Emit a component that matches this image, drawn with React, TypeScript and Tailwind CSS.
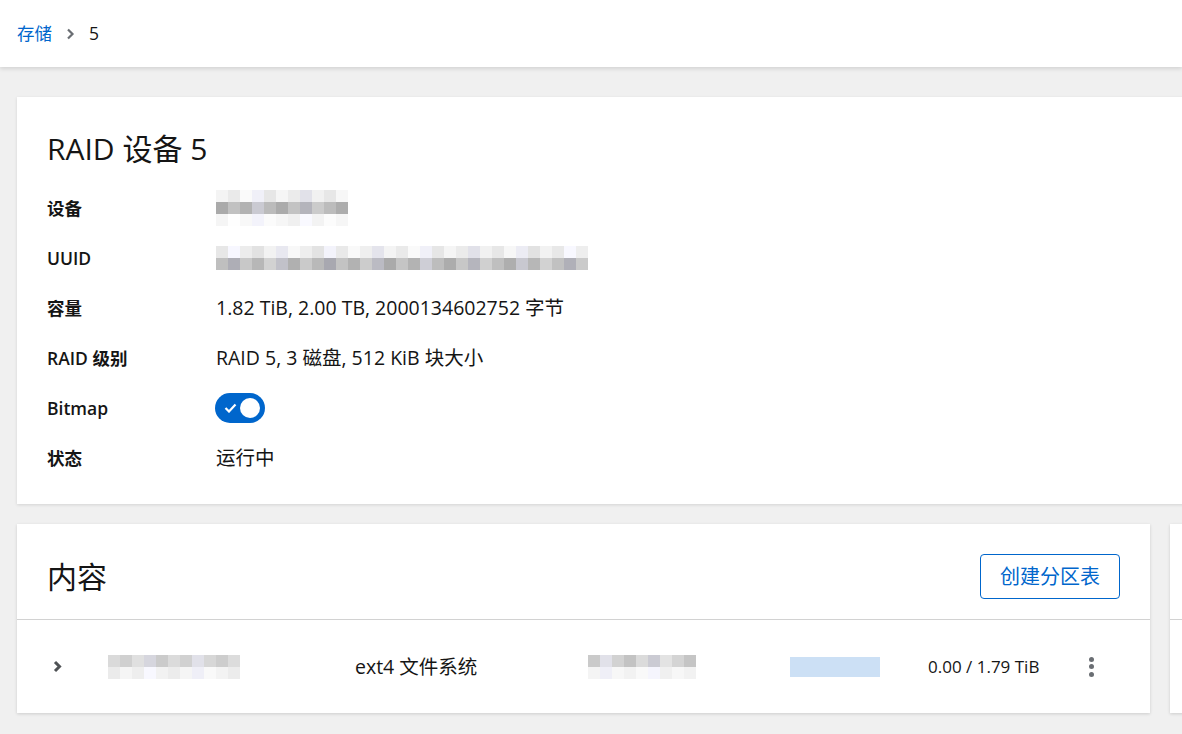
import React from "react";

const font = { fontFamily: '"Open Sans", "Noto Sans CJK SC", sans-serif' };

function Mosaic({ cols, rows, seed, cell = 12, h = 12 }: { cols: number; rows: number[][]; seed: number; cell?: number; h?: number }) {
  return (
    <div className="flex flex-col">
      {rows.map((range, r) => (
        <div key={r} className="flex">
          {Array.from({ length: cols }).map((_, c) => {
            const v = ((c * 37 + r * 53 + seed * 17) % 23) / 22;
            const lo = range[0];
            const hi = range[1];
            const g = Math.round(lo + (hi - lo) * v);
            const b = g + (((c + seed) % 4) === 0 ? 8 : 0);
            return <div key={c} style={{ width: cell, height: h, background: `rgb(${g},${g},${Math.min(255, b)})` }} />;
          })}
        </div>
      ))}
    </div>
  );
}

function Row({ label, children }: { label: string; children: React.ReactNode }) {
  return (
    <div className="flex h-[50px] items-center">
      <div className="w-[169px] shrink-0 text-[17.5px] font-semibold text-[#151515]">{label}</div>
      <div className="text-[19.5px] text-[#151515]">{children}</div>
    </div>
  );
}

export default function App() {
  return (
    <div className="h-[734px] w-[1182px] overflow-hidden bg-[#f0f0f0]" style={font}>
      <div className="relative z-10 flex h-[67px] items-center gap-[14px] bg-white px-[17px] shadow-[0_2px_4px_rgba(0,0,0,0.12)]">
        <span className="text-[17.5px] text-[#0066cc]">存储</span>
        <svg width="9" height="12" viewBox="0 0 9 12">
          <path d="M2 1.5 L6.5 6 L2 10.5" fill="none" stroke="#6a6e73" strokeWidth="2.2" />
        </svg>
        <span className="text-[17.5px] text-[#151515]">5</span>
      </div>
      <div className="w-[1500px] pl-[17px] pt-[30px]">
        <div className="bg-white px-[30px] pb-[21px] pt-[28px] shadow-[0_1px_3px_rgba(0,0,0,0.12)]">
          <h1 className="mb-[6px] h-[52px] text-[30px] leading-[48px] text-[#151515]">RAID 设备 5</h1>
          <Row label="设备">
            <Mosaic cols={11} seed={1} rows={[[225, 250], [168, 205], [240, 254]]} />
          </Row>
          <Row label="UUID">
            <Mosaic cols={31} seed={3} rows={[[225, 250], [168, 210]]} />
          </Row>
          <Row label="容量">1.82 TiB, 2.00 TB, 2000134602752 字节</Row>
          <Row label="RAID 级别">RAID 5, 3 磁盘, 512 KiB 块大小</Row>
          <Row label="Bitmap">
            <div className="-ml-px flex h-[30px] w-[50px] items-center rounded-full bg-[#0066cc] pl-[9px] pr-[5px]">
              <svg width="13" height="10" viewBox="0 0 13 10">
                <path d="M1.5 5 L5 8.5 L11.5 1.5" fill="none" stroke="white" strokeWidth="2.2" />
              </svg>
              <div className="ml-auto h-[20px] w-[20px] rounded-full bg-white" />
            </div>
          </Row>
          <Row label="状态">运行中</Row>
        </div>
        <div className="mt-[20px] flex gap-[20px]">
          <div className="w-[1133px] shrink-0 bg-white shadow-[0_1px_3px_rgba(0,0,0,0.15)]">
            <div className="flex items-center justify-between border-b border-[#d2d2d2] pb-[20px] pl-[30px] pr-[30px] pt-[30px]">
              <h2 className="text-[30px] leading-[45px] text-[#151515]">内容</h2>
              <button className="h-[45px] w-[140px] rounded-[4px] border border-[#0066cc] text-[20px] text-[#0066cc]">创建分区表</button>
            </div>
            <div className="flex h-[93px] items-center text-[19.5px] text-[#151515]">
              <div className="w-[91px] pl-[35px]">
                <svg width="11" height="13" viewBox="0 0 11 13">
                  <path d="M3 2 L7.5 6.5 L3 11" fill="none" stroke="#4f5255" strokeWidth="3" />
                </svg>
              </div>
              <div className="w-[247px]">
                <Mosaic cols={11} seed={5} rows={[[200, 225], [235, 250]]} />
              </div>
              <div className="w-[233px]">ext4 文件系统</div>
              <div className="w-[202px]">
                <Mosaic cols={9} seed={7} rows={[[195, 232], [238, 250]]} />
              </div>
              <div className="w-[138px]">
                <div className="h-[20px] w-[90px] bg-[#cce0f5]" />
              </div>
              <div className="w-[150px] text-[17px]">0.00 / 1.79 TiB</div>
              <div className="flex flex-col gap-[2.5px] pl-[11px]">
                <div className="h-[5px] w-[5px] rounded-full bg-[#6a6e73]" />
                <div className="h-[5px] w-[5px] rounded-full bg-[#6a6e73]" />
                <div className="h-[5px] w-[5px] rounded-full bg-[#6a6e73]" />
              </div>
            </div>
          </div>
          <div className="w-[300px] bg-white shadow-[0_1px_3px_rgba(0,0,0,0.15)]">
            <div className="h-[96px] border-b border-[#d2d2d2]" />
            <div className="h-[93px]" />
          </div>
        </div>
      </div>
    </div>
  );
}
